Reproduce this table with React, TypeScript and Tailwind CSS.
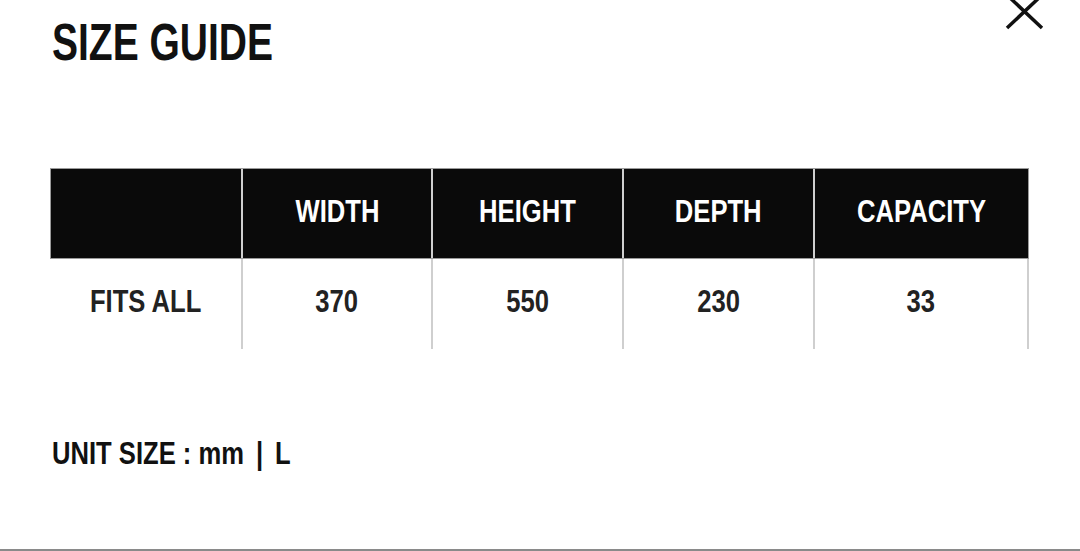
const font = { fontFamily: '"Liberation Sans", Arial, sans-serif' };

const headers = ["WIDTH", "HEIGHT", "DEPTH", "CAPACITY"];
const values = ["370", "550", "230", "33"];

function Cond({ children, origin = "origin-center" }: { children: React.ReactNode; origin?: string }) {
  return <span className={"inline-block scale-x-[0.8] whitespace-nowrap " + origin}>{children}</span>;
}

export default function App() {
  return (
    <div className="relative h-[551px] w-[1080px] overflow-hidden border-b-2 border-[#8a8a8a] bg-white" style={font}>
      <button className="absolute left-[1005px] top-[-7px]" aria-label="Close">
        <svg width="39" height="37" viewBox="0 0 39 37" fill="none" stroke="#111" strokeWidth="3.5">
          <path d="M2 2 L37 35 M37 2 L2 35" />
        </svg>
      </button>

      <div className="px-[50px] pt-[16px]">
        <h1 className="pl-[2px] text-[52px] font-bold leading-none text-[#111]">
          <span className="inline-block origin-left scale-x-[0.75] whitespace-nowrap">SIZE GUIDE</span>
        </h1>

        <div className="mt-[100px] w-[979px]">
          {/* header row */}
          <div className="grid grid-cols-[190px_190px_191px_191px_215px] border border-[#9a9a9a] bg-[#0a0a0a]">
            <div className="h-[89px]" />
            {headers.map((h) => (
              <div key={h} className="flex h-[89px] items-center justify-center border-l-2 border-[#cfcfcf] pb-[6px] text-[32px] font-bold text-white">
                <Cond>{h}</Cond>
              </div>
            ))}
          </div>
          {/* body row */}
          <div className="grid grid-cols-[191px_190px_191px_191px_216px]">
            <div className="flex h-[90px] items-center justify-center pb-[6px] text-[32px] font-bold text-[#222]">
              <Cond>FITS ALL</Cond>
            </div>
            {values.map((v, i) => (
              <div
                key={v}
                className={
                  "flex h-[90px] items-center justify-center border-l-2 border-[#cfcfcf] pb-[6px] text-[32px] font-bold text-[#222]" +
                  (i === values.length - 1 ? " border-r-2" : "")
                }
              >
                <Cond>{v}</Cond>
              </div>
            ))}
          </div>
        </div>

        <p className="mt-[88px] pl-[2px] text-[32px] font-bold leading-none text-[#111]">
          <Cond origin="origin-left">
            UNIT SIZE : mm <span className="mx-[6px]">|</span> L
          </Cond>
        </p>
      </div>
    </div>
  );
}
